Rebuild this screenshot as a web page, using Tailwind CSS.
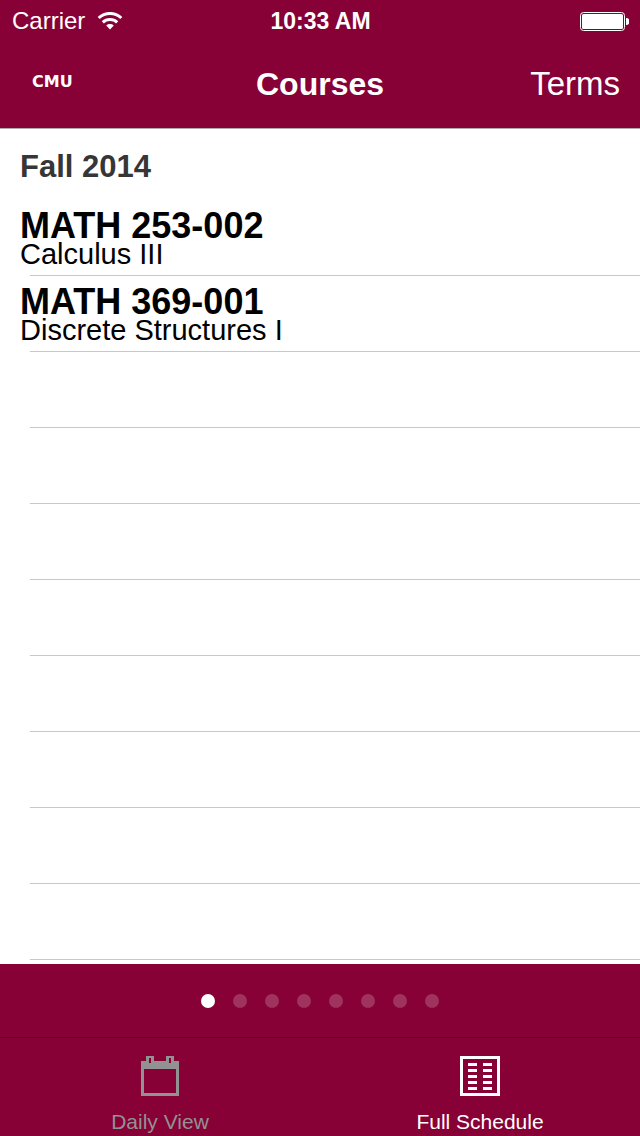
<!DOCTYPE html>
<html lang="en">
<head>
    <meta charset="UTF-8">
    <meta name="viewport" content="width=device-width, initial-scale=1.0">
    <title>Courses</title>
    <script src="https://cdn.jsdelivr.net/npm/@tailwindcss/browser@4"></script>
</head>
<body class="flex flex-col min-h-screen bg-white text-black font-['Liberation_Sans',Arial,sans-serif]">

    <!-- Header -->
    <header class="bg-[#870036] text-white border-b border-[#b2a9ac]">
        <div class="grid grid-cols-[1fr_auto_1fr] items-center h-10 pl-3 pr-[11px] pt-0.5 text-2xl leading-6">
            <div class="flex items-center gap-3">
                <span>Carrier</span>
                <svg class="w-[26px] h-[18px]" viewBox="0 0 26 18" fill="none" stroke="white" stroke-width="3" role="img" aria-label="Wi-Fi">
                    <path d="M1.7 6a16.3 16.3 0 0 1 22.6 0"/>
                    <path d="M5.8 10.3a10.4 10.4 0 0 1 14.4 0"/>
                    <path d="M13 17.6l-3.8-4a5.6 5.6 0 0 1 7.6 0z" fill="white" stroke="none"/>
                </svg>
            </div>
            <span class="text-[23px] font-bold">10:33 AM</span>
            <svg class="w-[49px] h-[19px] justify-self-end" viewBox="0 0 49 19" role="img" aria-label="Battery full">
                <rect x="0.5" y="0.5" width="44" height="18" rx="3" fill="none" stroke="white"/>
                <rect x="2" y="2" width="41" height="15" rx="1.5" fill="white"/>
                <path d="M46 6a3.3 3.3 0 0 1 0 7z" fill="white"/>
            </svg>
        </div>
        <nav class="grid grid-cols-[1fr_auto_1fr] items-center h-[88px] px-5">
            <a href="#" class="pl-3 pb-1 text-base leading-4 font-bold font-['DejaVu_Sans',sans-serif]">CMU</a>
            <h1 class="text-[32px] leading-8 font-bold">Courses</h1>
            <button type="button" class="justify-self-end text-[33px] leading-8">Terms</button>
        </nav>
    </header>

    <!-- Course list -->
    <main class="flex-grow pl-5 pb-1">
        <h2 class="pt-[22px] pb-[17px] text-[31px] leading-8 font-bold text-[#363636]">Fall 2014</h2>
        <ul>
            <li>
                <a href="#" class="block h-[75px] pt-[10px]">
                    <h3 class="text-4xl leading-8 font-bold">MATH 253-002</h3>
                    <p class="text-[29px] leading-6">Calculus III</p>
                </a>
                <hr class="ml-[10px] border-[#c8c7cc]">
            </li>
            <li>
                <a href="#" class="block h-[75px] pt-[10px]">
                    <h3 class="text-4xl leading-8 font-bold">MATH 369-001</h3>
                    <p class="text-[29px] leading-6">Discrete Structures I</p>
                </a>
                <hr class="ml-[10px] border-[#c8c7cc]">
            </li>
        </ul>
        <!-- Empty rows -->
        <div aria-hidden="true">
            <hr class="mt-[75px] ml-[10px] border-[#c8c7cc]">
            <hr class="mt-[75px] ml-[10px] border-[#c8c7cc]">
            <hr class="mt-[75px] ml-[10px] border-[#c8c7cc]">
            <hr class="mt-[75px] ml-[10px] border-[#c8c7cc]">
            <hr class="mt-[75px] ml-[10px] border-[#c8c7cc]">
            <hr class="mt-[75px] ml-[10px] border-[#c8c7cc]">
            <hr class="mt-[75px] ml-[10px] border-[#c8c7cc]">
            <hr class="mt-[75px] ml-[10px] border-[#c8c7cc]">
        </div>
    </main>

    <!-- Footer -->
    <footer class="bg-[#870036] text-white">
        <div class="flex items-center justify-center gap-[18px] h-[73px]">
            <span class="size-[14px] rounded-full bg-white"></span>
            <span class="size-[14px] rounded-full bg-white/20"></span>
            <span class="size-[14px] rounded-full bg-white/20"></span>
            <span class="size-[14px] rounded-full bg-white/20"></span>
            <span class="size-[14px] rounded-full bg-white/20"></span>
            <span class="size-[14px] rounded-full bg-white/20"></span>
            <span class="size-[14px] rounded-full bg-white/20"></span>
            <span class="size-[14px] rounded-full bg-white/20"></span>
        </div>
        <nav class="grid grid-cols-2 h-[99px] border-t border-[#5f0026] text-[21px] leading-5">
            <a href="#" class="flex flex-col items-center gap-4 pt-[18px] text-[#929292]">
                <svg class="w-[38px] h-10" viewBox="0 0 38 40" fill="currentColor" aria-hidden="true">
                    <path fill-rule="evenodd" d="M0 5h5V0h8v5h12V0h8v5h5v35H0zM3 13v24h32V13zM8 2v5h2V2zM28 2v5h2V2z"/>
                </svg>
                <span>Daily View</span>
            </a>
            <a href="#" class="flex flex-col items-center gap-4 pt-[18px]" aria-current="page">
                <svg class="size-10" viewBox="0 0 40 40" fill="none" stroke="currentColor" stroke-width="3" aria-hidden="true">
                    <rect x="1.5" y="1.5" width="37" height="37"/>
                    <path d="M8 8.5h9M23 8.5h9M8 14.5h9M23 14.5h9M8 20.5h9M23 20.5h9M8 26.5h9M23 26.5h9M8 32.5h9M23 32.5h9"/>
                </svg>
                <span>Full Schedule</span>
            </a>
        </nav>
    </footer>

</body>
</html>
